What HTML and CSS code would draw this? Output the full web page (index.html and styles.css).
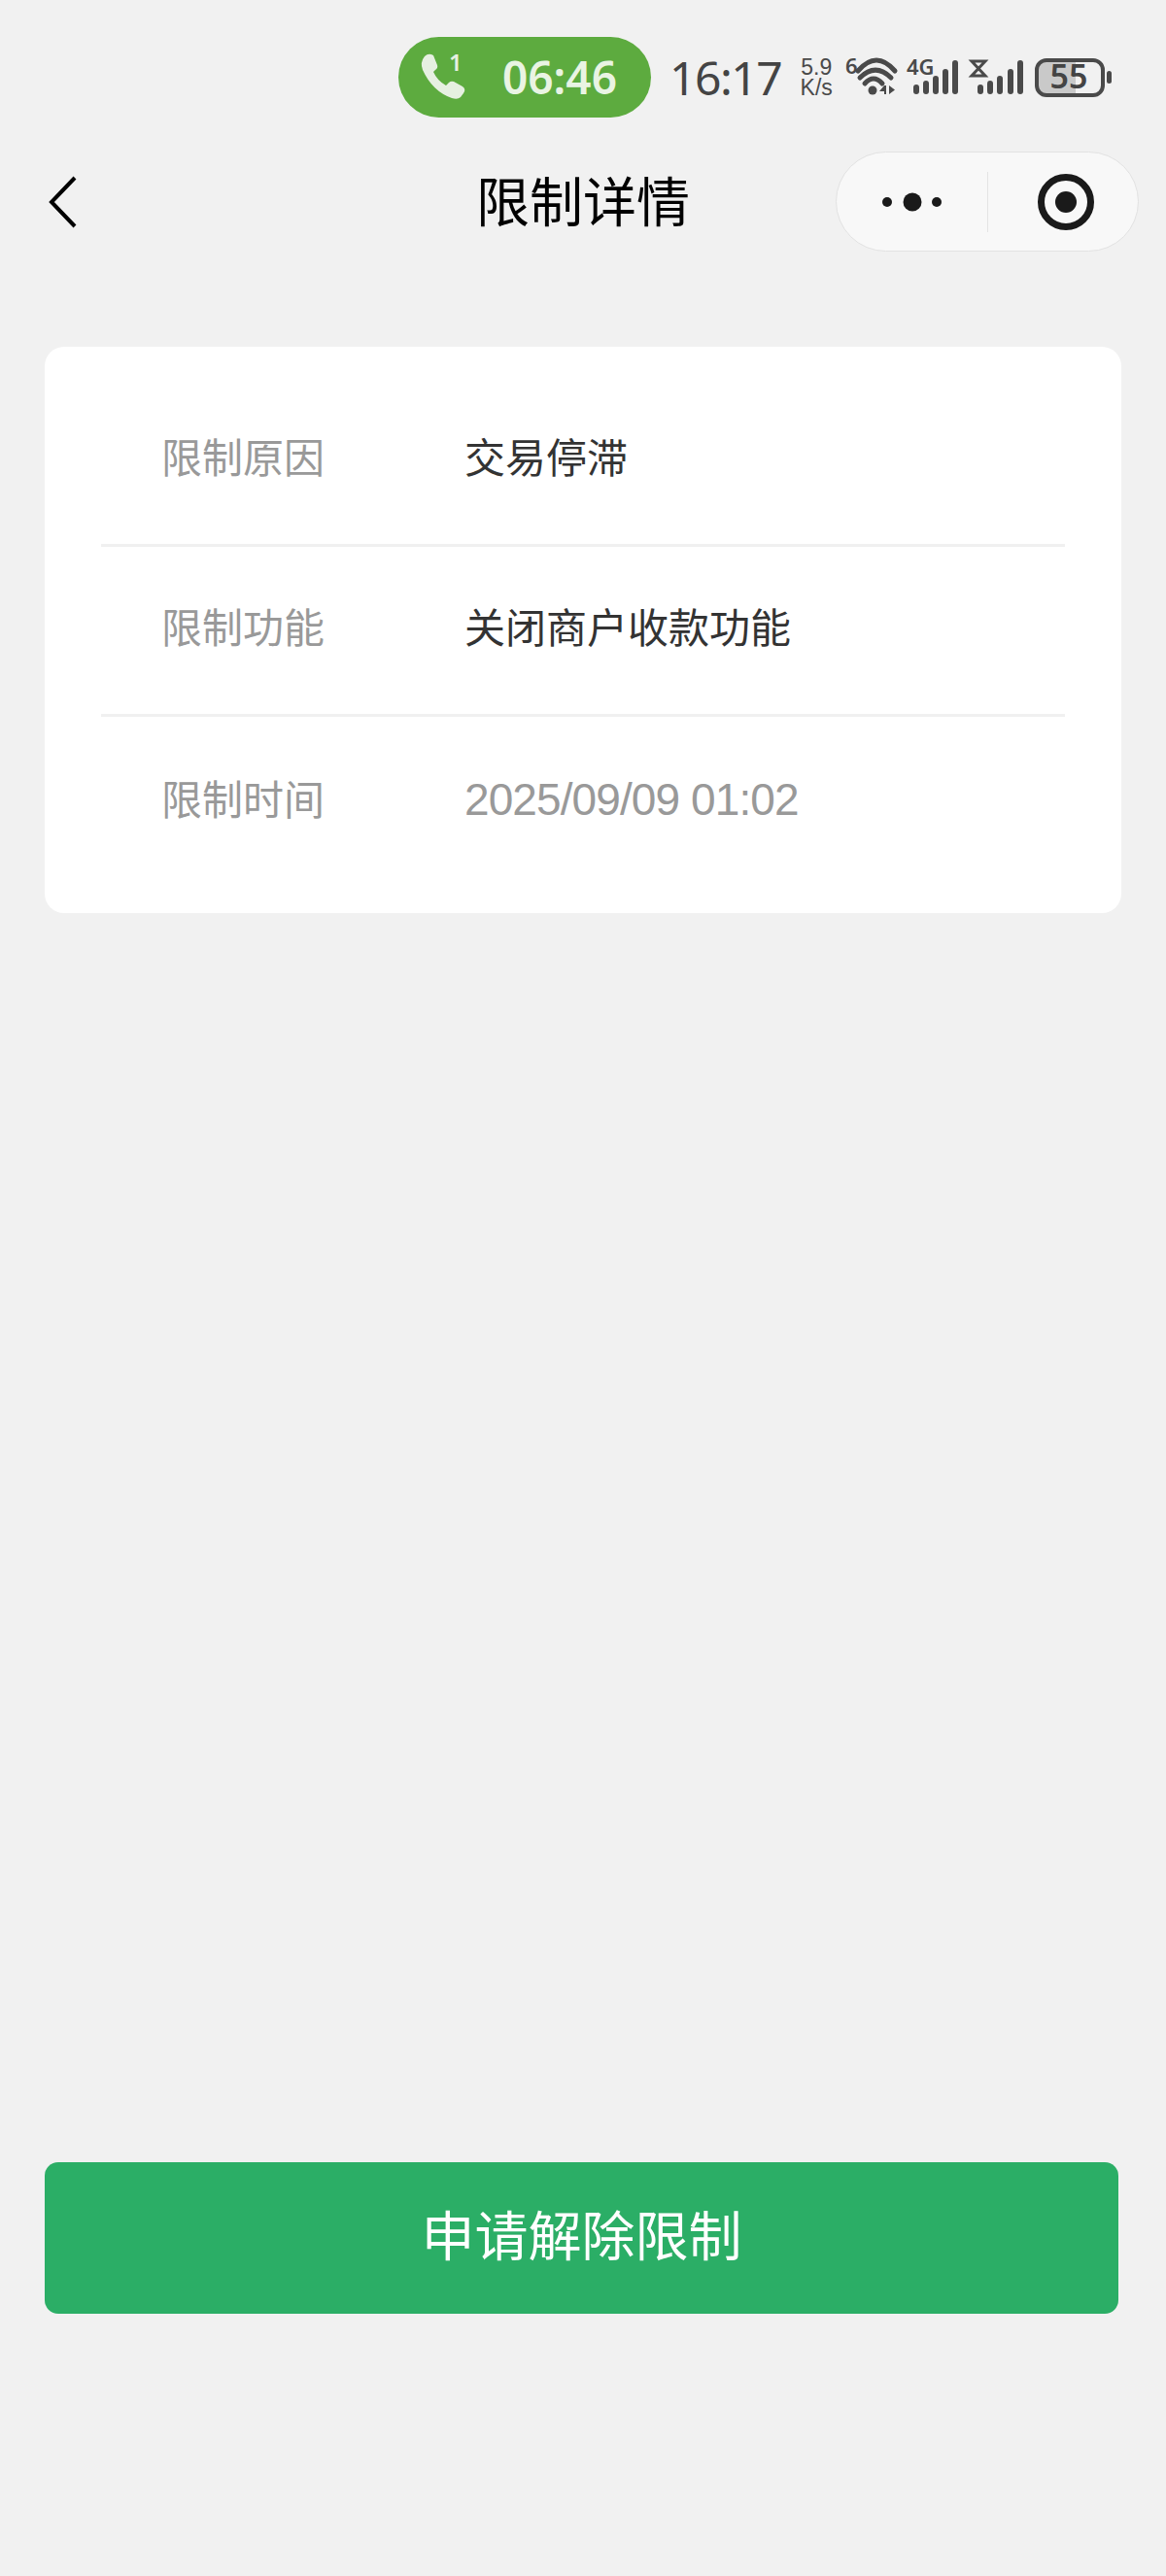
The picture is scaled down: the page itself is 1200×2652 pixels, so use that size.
FILE: index.html
```html
<!DOCTYPE html>
<html lang="zh-CN">

<head>
    <meta charset="UTF-8">
    <meta name="viewport" content="width=device-width, initial-scale=1.0">
    <title>限制详情</title>
    <link rel="stylesheet" href="styles.css">
</head>

<body>
    <div class="status-bar">
        <div class="call-pill">
            <svg class="call-icon" width="50" height="50" viewBox="0 0 50 50">
                <path class="call-fill" d="M6 4 Q10 0 15 3 L19 13 Q20 16 17 18 L15 20 Q19 29 28 34 L31 31 Q33 29 36 30 L45 35 Q49 38 46 42 L43 46 Q40 49 34 47 Q14 40 4 18 Q1 10 6 4 Z" />
                <text class="call-sim" x="31" y="19">1</text>
            </svg>
            <span class="call-time">06:46</span>
        </div>
        <span class="clock">16:17</span>
        <div class="net-speed">
            <span>5.9</span>
            <span>K/s</span>
        </div>
        <!-- wifi -->
        <svg class="status-icon wifi-icon" width="54" height="42" viewBox="0 0 54 42">
            <text class="icon-label" x="0" y="16">6</text>
            <path class="wifi-arc" d="M13 13 Q32 -9 51 13" />
            <path class="wifi-arc" d="M15 20 Q31 4 47 20" />
            <path class="wifi-arc" d="M20 26 Q29 16 38 26" />
            <circle class="icon-fill" cx="28" cy="33" r="4.5" />
            <path class="icon-fill" d="M42 28 V37 H40 V34 H35 L40 28 Z M45 28 L51 32.5 L45 37 Z" />
        </svg>
        <!-- sim 1 -->
        <svg class="status-icon sim-one" width="56" height="42" viewBox="0 0 56 42">
            <text class="icon-label" x="0" y="17">4G</text>
            <rect class="icon-fill" x="7" y="27" width="6" height="10" rx="3" />
            <rect class="icon-fill" x="17" y="23" width="6" height="14" rx="3" />
            <rect class="icon-fill" x="27" y="18" width="6" height="19" rx="3" />
            <rect class="icon-fill" x="37" y="11" width="6" height="26" rx="3" />
            <rect class="icon-fill" x="47" y="2" width="6" height="35" rx="3" />
        </svg>
        <!-- sim 2 -->
        <svg class="status-icon sim-two" width="54" height="42" viewBox="0 0 54 42">
            <path class="glass" d="M1 3 H15 L8 10.5 L15 18 H1 L8 10.5 Z" />
            <rect class="icon-fill" x="7" y="27" width="6" height="10" rx="3" />
            <rect class="icon-fill" x="17" y="23" width="6" height="14" rx="3" />
            <rect class="icon-fill" x="27" y="18" width="6" height="19" rx="3" />
            <rect class="icon-fill" x="38" y="11" width="6" height="26" rx="3" />
            <rect class="icon-fill" x="48" y="2" width="6" height="35" rx="3" />
        </svg>
        <!-- battery -->
        <svg class="status-icon battery-icon" width="80" height="42" viewBox="0 0 80 42">
            <path class="battery-level" d="M10 2 H42 V38 H10 Q2 38 2 30 V10 Q2 2 10 2 Z" />
            <rect class="battery-shell" x="2" y="2" width="68" height="36" rx="10" />
            <rect class="icon-fill" x="74" y="13" width="5" height="13" rx="2.5" />
            <text class="battery-text" x="35" y="31">55</text>
        </svg>
    </div>

    <div class="nav-bar">
        <svg class="back-icon" width="30" height="54" viewBox="0 0 30 54">
            <path d="M27 2 L3 27 L27 52" />
        </svg>
        <div class="nav-title">限制详情</div>
        <div class="capsule">
            <div class="capsule-part">
                <svg class="dots-icon" width="64" height="22" viewBox="0 0 64 22">
                    <circle class="capsule-fill" cx="6" cy="11" r="5" />
                    <circle class="capsule-fill" cx="32" cy="11" r="9.5" />
                    <circle class="capsule-fill" cx="57" cy="11" r="5" />
                </svg>
            </div>
            <div class="capsule-line"></div>
            <div class="capsule-part">
                <svg class="record-icon" width="60" height="60" viewBox="0 0 60 60">
                    <circle class="capsule-ring" cx="30" cy="30" r="25.5" />
                    <circle class="capsule-fill" cx="30" cy="30" r="11" />
                </svg>
            </div>
        </div>
    </div>

    <div class="info-card">
        <div class="info-row">
            <div class="info-label">限制原因</div>
            <div class="info-value">交易停滞</div>
        </div>
        <div class="info-row">
            <div class="info-label">限制功能</div>
            <div class="info-value">关闭商户收款功能</div>
        </div>
        <div class="info-row">
            <div class="info-label">限制时间</div>
            <div class="info-value info-date">2025/09/09 01:02</div>
        </div>
    </div>

    <a href="javascript:;" class="main-btn">申请解除限制</a>
</body>

</html>
```

FILE: styles.css
```css
* {
    margin: 0;
    padding: 0;
    box-sizing: border-box;
}

body {
    width: 1200px;
    height: 2652px;
    overflow: hidden;
    background-color: #f1f1f1;
    font-family: "Liberation Sans", "Noto Sans CJK SC", sans-serif;
}

a {
    text-decoration: none;
}

/* 状态栏 */
.status-bar {
    display: flex;
    align-items: flex-start;
    height: 156px;
    padding: 38px 0 0 410px;
}

.status-bar svg {
    flex-shrink: 0;
    overflow: visible;
}

.call-pill {
    display: flex;
    align-items: center;
    width: 260px;
    height: 83px;
    padding-left: 21px;
    border-radius: 42px;
    background-color: #5dab3f;
}

.call-icon {
    margin-top: -2px;
}

.call-fill {
    fill: #e6f0e1;
}

.call-sim {
    font-family: "Noto Sans", sans-serif;
    font-size: 24px;
    font-weight: 600;
    fill: #e6f0e1;
}

.call-time {
    margin-left: 36px;
    font-family: "Noto Sans", sans-serif;
    font-size: 46px;
    font-weight: 600;
    line-height: 83px;
    color: #e9f4e3;
}

.clock {
    margin-left: 19px;
    font-family: "Noto Sans", sans-serif;
    font-size: 48px;
    line-height: 83px;
    letter-spacing: -1.5px;
    color: #444;
}

.net-speed {
    display: flex;
    flex-direction: column;
    align-items: center;
    width: 38px;
    margin: 21px 0 0 17px;
    font-size: 23px;
    line-height: 21px;
    color: #4a4a4a;
}

.status-icon {
    margin-top: 22px;
}

.wifi-icon {
    margin-left: 11px;
}

.sim-one {
    margin-left: 9px;
}

.sim-two {
    margin-left: 10px;
}

.battery-icon {
    margin-left: 12px;
}

.icon-fill {
    fill: #4a4a4a;
}

.icon-label {
    font-family: "Noto Sans", sans-serif;
    font-size: 22px;
    font-weight: 600;
    fill: #4a4a4a;
}

.wifi-arc {
    fill: none;
    stroke: #4a4a4a;
    stroke-width: 5;
    stroke-linecap: round;
}

.glass {
    fill: none;
    stroke: #4a4a4a;
    stroke-width: 3;
}

.battery-level {
    fill: #c9c9c9;
}

.battery-shell {
    fill: none;
    stroke: #4a4a4a;
    stroke-width: 4;
}

.battery-text {
    font-family: "Noto Sans", sans-serif;
    font-size: 34px;
    font-weight: 600;
    text-anchor: middle;
    fill: #444;
}

/* 导航栏 */
.nav-bar {
    display: grid;
    grid-template-columns: 1fr auto 1fr;
    align-items: center;
    height: 103px;
    padding: 0 28px;
}

.back-icon {
    margin-left: 22px;
}

.back-icon path {
    fill: none;
    stroke: #000;
    stroke-width: 4;
}

.nav-title {
    height: 103px;
    padding-top: 4px;
    font-size: 55px;
    line-height: 99px;
    color: #000;
}

.capsule {
    display: flex;
    align-items: center;
    justify-self: end;
    width: 312px;
    height: 103px;
    border: 1px solid #e2e2e2;
    border-radius: 52px;
    background-color: #f8f8f8;
}

.capsule-part {
    display: flex;
    justify-content: center;
    align-items: center;
    flex: 1;
}

.dots-icon {
    margin-left: 2px;
}

.record-icon {
    margin-left: 6px;
}

.capsule-line {
    width: 1px;
    height: 62px;
    background-color: #e4e4e4;
}

.capsule-fill {
    fill: #1a1a1a;
}

.capsule-ring {
    fill: none;
    stroke: #1a1a1a;
    stroke-width: 7;
}

/* 信息卡片 */
.info-card {
    width: 1108px;
    height: 583px;
    margin: 98px 0 0 46px;
    padding: 31px 58px 0;
    border-radius: 20px;
    background-color: #fff;
}

.info-row {
    display: grid;
    grid-template-columns: 312px 1fr;
    align-items: center;
    height: 175px;
    padding: 0 0 2px 62px;
    border-bottom: 3px solid #f0f0f0;
    font-size: 42px;
    line-height: 60px;
}

.info-row:last-child {
    border-bottom: 0;
}

.info-label {
    color: #999;
}

.info-value {
    color: #333;
}

.info-date {
    padding-bottom: 4px;
    font-size: 46px;
    letter-spacing: -0.9px;
    color: #999;
}

/* 底部按钮 */
.main-btn {
    display: block;
    width: 1105px;
    height: 156px;
    margin: 1286px 0 0 46px;
    border-radius: 14px;
    background-color: #2bae66;
    font-size: 55px;
    line-height: 154px;
    text-align: center;
    color: #fff;
}
```
